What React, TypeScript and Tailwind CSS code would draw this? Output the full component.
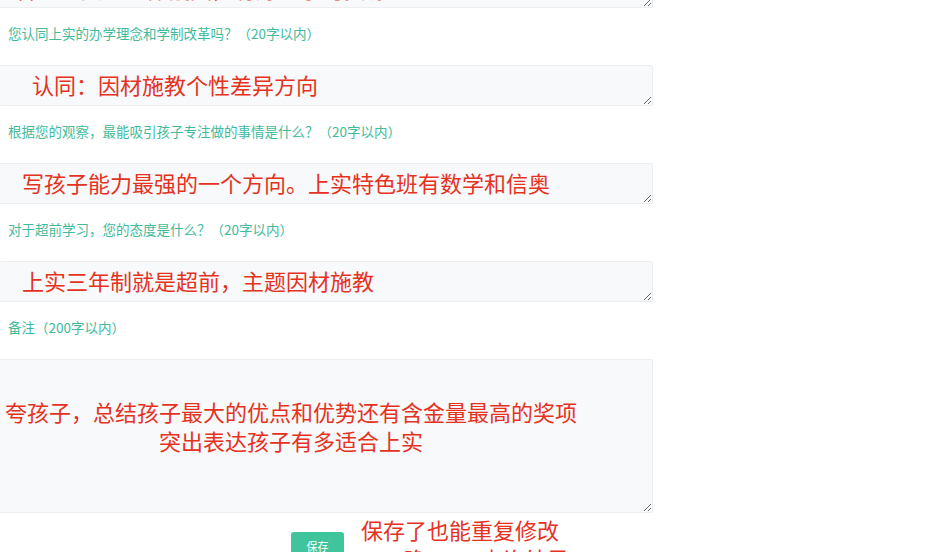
import React from "react"

const cjk = "font-['Microsoft_YaHei','Noto_Sans_CJK_SC',sans-serif]"

type FieldProps = {
  label?: string
  value: string
  box: string
}

function Field({ label, value, box }: FieldProps) {
  return (
    <div>
      <textarea
        readOnly
        value={value}
        className={`${cjk} block w-[654px] -ml-px ${box} bg-[#f8f9fa] border border-[#eceef0] rounded-[2px] outline-none overflow-hidden text-[22px] leading-[29px] text-[#e5321f]`}
      />
      {label && (
        <div className="h-[57px] pt-[16px] pl-[8px]">
          <p className={`${cjk} text-[13.5px] leading-[18px] text-[#3fbb9b]`}>{label}</p>
        </div>
      )}
    </div>
  )
}

export default function App() {
  return (
    <div className="w-[934px] h-[552px] overflow-hidden bg-white">
      <div className="-mt-[33px] flex flex-col">
        <Field
          label="您认同上实的办学理念和学制改革吗？（20字以内）"
          value="看重上实的整体氛围，有好的学习资源"
          box="h-[41px] pt-[6px] pl-[14px]"
        />
        <Field
          label="根据您的观察，最能吸引孩子专注做的事情是什么？（20字以内）"
          value="认同：因材施教个性差异方向"
          box="h-[41px] pt-[4px] pl-[32px]"
        />
        <Field
          label="对于超前学习，您的态度是什么？（20字以内）"
          value="写孩子能力最强的一个方向。上实特色班有数学和信奥"
          box="h-[41px] pt-[4px] pl-[22px]"
        />
        <Field
          label="备注（200字以内）"
          value="上实三年制就是超前，主题因材施教"
          box="h-[41px] pt-[4px] pl-[22px]"
        />
        <Field
          value={"夸孩子，总结孩子最大的优点和优势还有含金量最高的奖项\n突出表达孩子有多适合上实"}
          box="h-[154px] pt-[37px] pl-[4px] pr-[74px] text-center"
        />
        <div className="mt-[19px] flex items-start">
          <button className={`${cjk} ml-[291px] w-[53px] h-[28px] rounded-[3px] bg-[#40c49c] text-white text-[11px]`}>
            保存
          </button>
          <div className={`${cjk} ml-[17px] -mt-[17px] text-[22px] leading-[29px] text-[#e5321f] whitespace-nowrap`}>
            <p>保存了也能重复修改</p>
            <p>4.15晚10:00查询结果</p>
          </div>
        </div>
      </div>
    </div>
  )
}
